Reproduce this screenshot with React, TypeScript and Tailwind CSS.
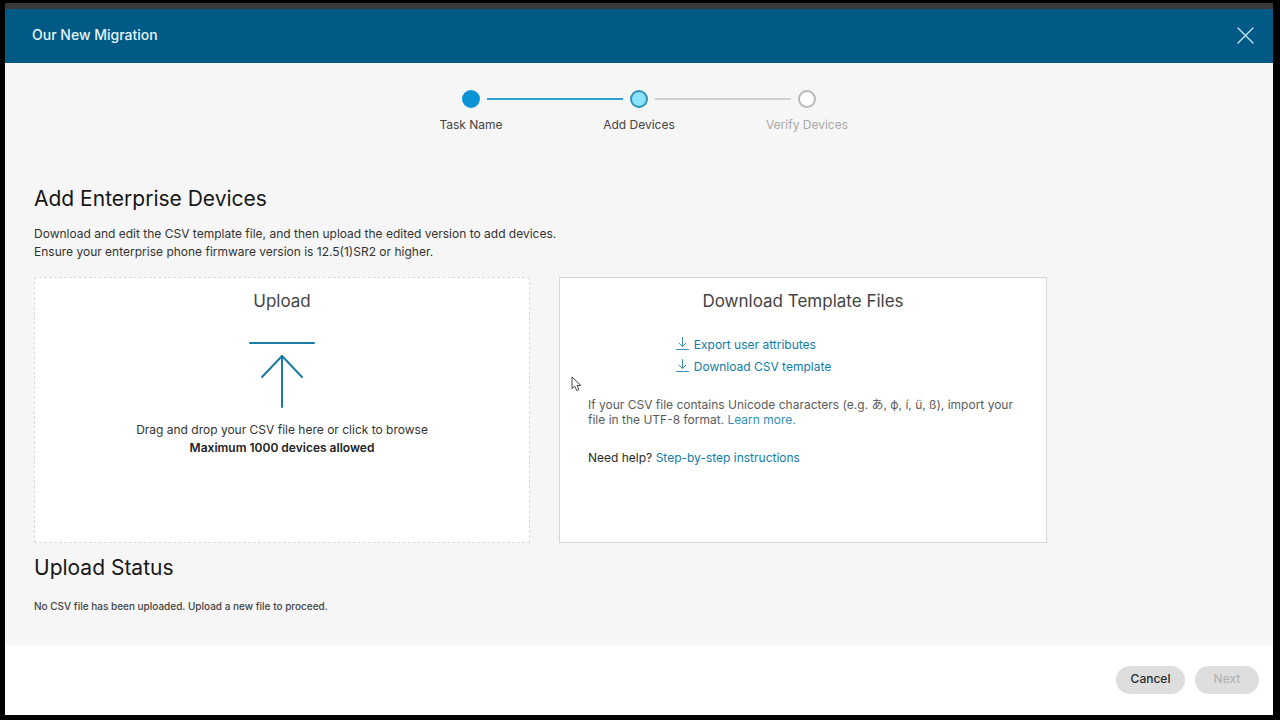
import { clsx } from 'clsx';

type StepState = 'done' | 'current' | 'upcoming';

interface Step {
  label: string;
  state: StepState;
}

const steps: Step[] = [
  { label: 'Task Name', state: 'done' },
  { label: 'Add Devices', state: 'current' },
  { label: 'Verify Devices', state: 'upcoming' },
];

const lineColor = {
  done: 'bg-[#2f9fd0]',
  current: 'bg-[#2f9fd0]',
  upcoming: 'bg-[#d0d0d0]',
};

const dotColor = {
  done: 'border-[#0a94d6] bg-[#0a94d6]',
  current: 'border-[#2d94b8] bg-[#8ae2ff]',
  upcoming: 'border-[#b8b8b8] bg-white',
};

function Stepper() {
  return (
    <ol className="flex justify-center">
      {steps.map((step, i) => {
        const next = steps[i + 1];
        return (
          <li key={step.label} className="flex w-[168px] flex-col gap-2">
            {/* Each step draws half of the line on either side of its dot */}
            <div className="flex items-center gap-[7px]">
              <span className={clsx('h-[2px] flex-1', i > 0 && lineColor[step.state])} />
              <span className={clsx('size-[18px] rounded-full border-2', dotColor[step.state])} />
              <span className={clsx('h-[2px] flex-1', next && lineColor[next.state])} />
            </div>
            <span
              className={clsx(
                'text-center text-xs leading-[18px]',
                step.state === 'upcoming' ? 'text-[#a8a8a8]' : 'text-[#444]'
              )}
            >
              {step.label}
            </span>
          </li>
        );
      })}
    </ol>
  );
}

function UploadIcon() {
  return (
    <svg width="68" height="68" viewBox="0 0 68 68" fill="none" stroke="#1a7ca3" strokeWidth="2" strokeLinecap="round" aria-hidden>
      <path d="M2 2H66" />
      <path d="M34 15V66" />
      <path d="M14 36L34 15L54 36" strokeLinejoin="round" />
    </svg>
  );
}

function DownloadIcon() {
  return (
    <svg className="mb-1" width="13" height="13" viewBox="0 0 13 13" fill="none" stroke="#3c93b8" strokeLinecap="round" strokeLinejoin="round" aria-hidden>
      <path d="M6.5 0.5V9.5" />
      <path d="M3 6L6.5 9.5L10 6" />
      <path d="M0.5 12.5H12.5" />
    </svg>
  );
}

function Pointer() {
  return (
    <svg
      className="pointer-events-none absolute left-[11px] top-[98px]"
      width="11"
      height="16"
      viewBox="0 0 11 16"
      fill="white"
      stroke="#444"
      aria-hidden
    >
      <path d="M1 1V12.5L3.8 10.2L5.7 14.5L7.9 13.5L6 9.4H9.8Z" />
    </svg>
  );
}

export default function App() {
  return (
    <div className="flex min-h-screen flex-col bg-black pb-[5px] pl-[5px] pr-[7px] pt-[3px] font-['Inter','Noto_Sans_CJK_JP',sans-serif]">
      <div className="flex flex-1 flex-col border-t-6 border-[#383838] bg-white">
        <header className="flex h-[54px] items-center justify-between bg-[#005a85] pb-[2px] pl-[27px] pr-[19px]">
          <h1 className="text-sm font-medium text-[#e4f4fc]">Our New Migration</h1>
          <button type="button" aria-label="Close" className="text-[#c8eafa]">
            <svg width="17" height="17" viewBox="0 0 17 17" fill="none" stroke="currentColor" strokeWidth="1.3" strokeLinecap="round">
              <path d="M1 1L16 16M16 1L1 16" />
            </svg>
          </button>
        </header>

        <main className="flex-1 bg-[#f6f6f6] px-[29px] pb-7 pt-[27px]">
          <Stepper />

          <h2 className="mt-[49px] text-[21px] leading-8 text-[#171717]">Add Enterprise Devices</h2>
          <p className="mt-[10px] text-xs leading-[18px] text-[#333]">
            Download and edit the CSV template file, and then upload the edited version to add devices.
            <br />
            Ensure your enterprise phone firmware version is 12.5(1)SR2 or higher.
          </p>

          <div className="mt-4 grid max-w-[1013px] grid-cols-[496fr_488fr] gap-[29px]">
            <label className="flex min-h-[266px] cursor-pointer flex-col items-center border border-dashed border-[#dcdcdc] bg-white pt-[11px] text-center text-xs">
              <span className="text-[17px] leading-6 text-[#444]">Upload</span>
              <span className="mt-7">
                <UploadIcon />
              </span>
              <span className="mt-3 leading-[18px] text-[#333]">Drag and drop your CSV file here or click to browse</span>
              <span className="font-semibold leading-[18px] text-[#222]">Maximum 1000 devices allowed</span>
              <input type="file" accept=".csv" className="sr-only" />
            </label>

            <section className="relative min-h-[266px] border border-[#d6d6d6] bg-white px-7 pt-[11px] text-xs">
              <h3 className="text-center text-[17px] leading-6 text-[#444]">Download Template Files</h3>
              <ul className="mx-auto mt-[21px] w-fit pr-[99px] leading-[22px] text-[#0f7dab]">
                <li>
                  <a href="#export" className="flex items-center gap-[5px]">
                    <DownloadIcon />
                    Export user attributes
                  </a>
                </li>
                <li>
                  <a href="#template" className="flex items-center gap-[5px]">
                    <DownloadIcon />
                    Download CSV template
                  </a>
                </li>
              </ul>
              <p className="mt-[19px] leading-[15px] text-[#5c5c5c]">
                If your CSV file contains Unicode characters (e.g. あ, ф, í, ü, ß), import your file in the UTF-8 format.{' '}
                <a href="#learn" className="text-[#2f8fb8]">Learn more.</a>
              </p>
              <p className="mt-[22px] leading-[18px] text-[#2b2b2b]">
                Need help? <a href="#steps" className="text-[#0f7dab]">Step-by-step instructions</a>
              </p>
              <Pointer />
            </section>
          </div>

          <h2 className="mt-[9px] text-[21px] leading-8 text-[#171717]">Upload Status</h2>
          <p className="mt-[15px] text-[10px] font-medium leading-[14px] text-[#444]">
            No CSV file has been uploaded. Upload a new file to proceed.
          </p>
        </main>

        <footer className="flex justify-end gap-[10px] px-[14px] pb-[21px] pt-[21px] text-xs font-medium">
          <button type="button" className="h-7 w-[69px] rounded-full bg-[#dedede] pb-[2px] text-[#2b2b2b]">
            Cancel
          </button>
          <button type="button" disabled className="h-7 w-16 rounded-full bg-[#dedede] pb-[2px] text-[#b5b5b5]">
            Next
          </button>
        </footer>
      </div>
    </div>
  );
}
